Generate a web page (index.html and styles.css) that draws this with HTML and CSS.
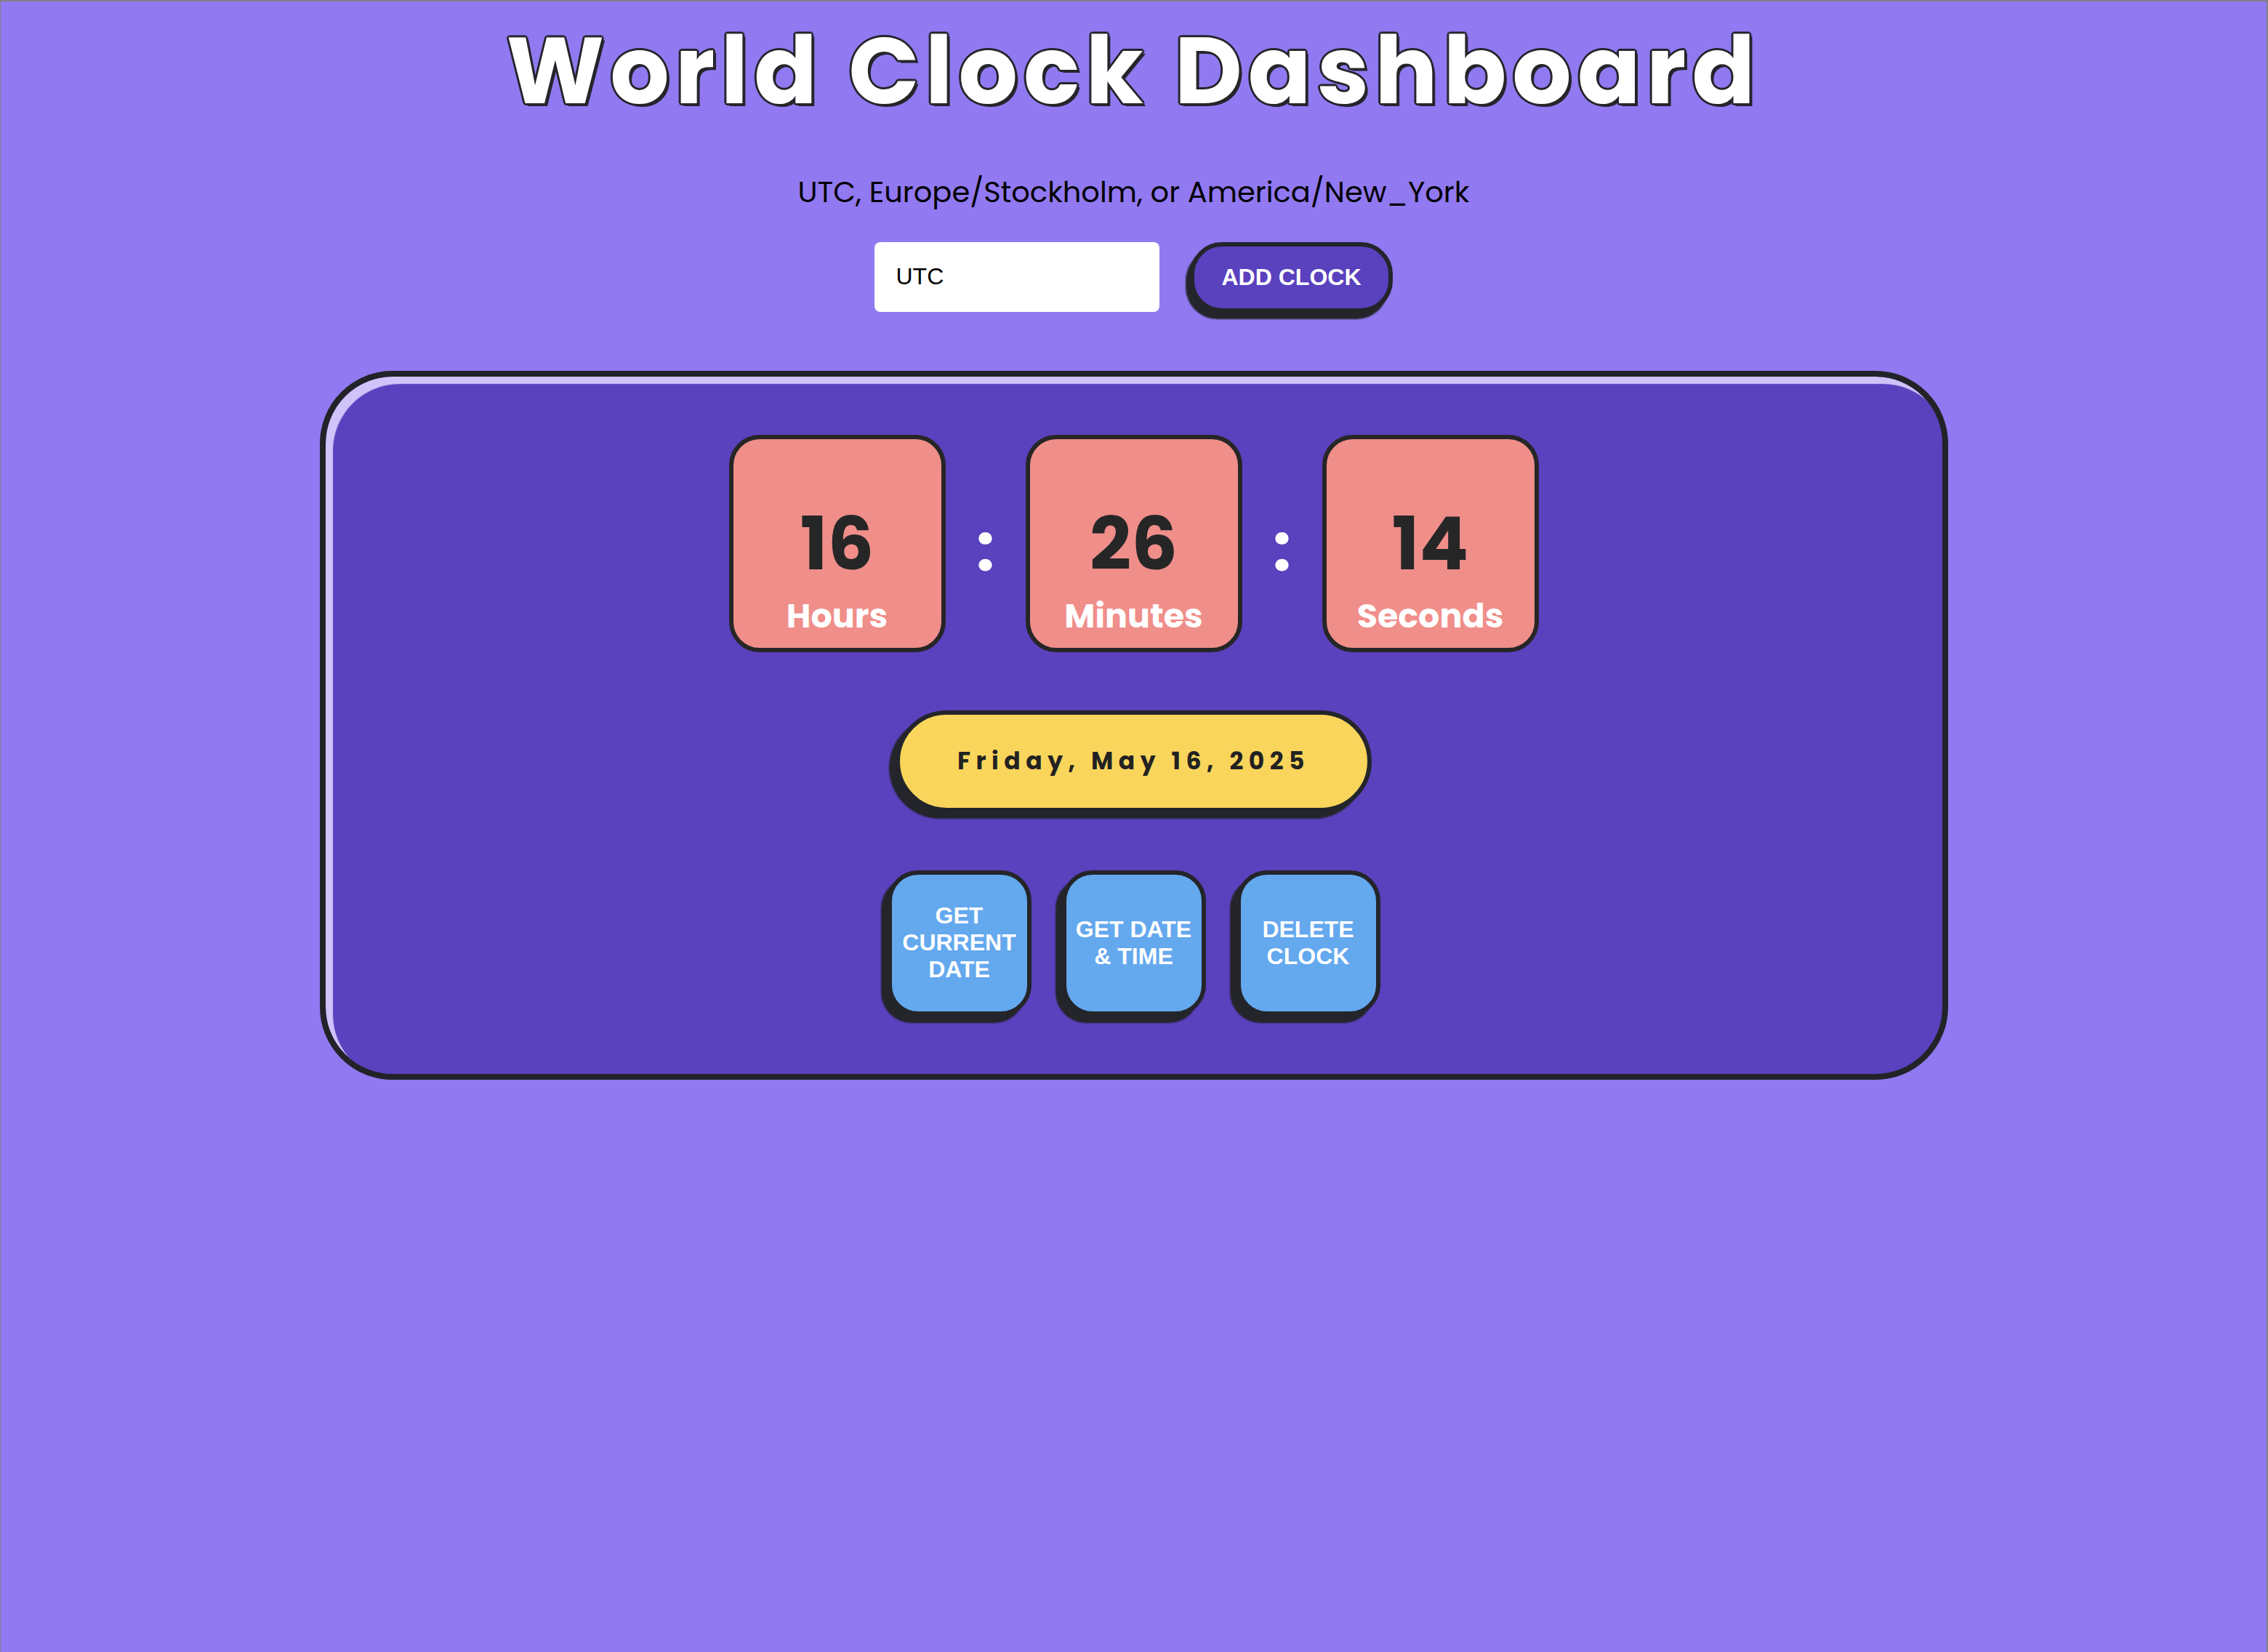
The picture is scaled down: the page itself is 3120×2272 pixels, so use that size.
FILE: index.html
```html
<!DOCTYPE html>
<html lang="en">
<head>
<meta charset="utf-8">
<title>World Clock Dashboard</title>
<link rel="stylesheet" href="styles.css">
</head>
<body>
<header class="header">
  <h1 class="title">World Clock Dashboard</h1>
  <p class="hint">UTC, Europe/Stockholm, or America/New_York</p>
  <div class="add-row">
    <input class="tz-input" type="text" value="UTC">
    <button class="btn-add">ADD CLOCK</button>
  </div>
</header>
<main class="clocks">
  <section class="clock-card">
    <div class="time-row">
      <div class="unit"><span class="num">16</span><span class="label">Hours</span></div>
      <span class="colon">:</span>
      <div class="unit"><span class="num">26</span><span class="label">Minutes</span></div>
      <span class="colon">:</span>
      <div class="unit"><span class="num">14</span><span class="label">Seconds</span></div>
    </div>
    <div class="date-pill">Friday, May 16, 2025</div>
    <div class="actions">
      <button class="act">GET CURRENT DATE</button>
      <button class="act">GET DATE &amp; TIME</button>
      <button class="act">DELETE CLOCK</button>
    </div>
  </section>
</main>
</body>
</html>
```

FILE: styles.css
```css
html {
  background: #9179f1;
  border-top: 2px solid #808080;
  border-left: 1px solid #808080;
  border-right: 2px solid #808080;
  min-height: 100%;
  box-sizing: border-box;
}
body {
  margin: 0;
  font-family: "Poppins", "Lato", sans-serif;
  color: #000;
}
.header {
  display: flex;
  flex-direction: column;
  align-items: center;
}
.title {
  margin: 19px 0 0;
  font-size: 128px;
  line-height: 1.2;
  font-weight: 700;
  letter-spacing: 8px;
  color: #fff;
  text-shadow:
    3px 0 0 #25252c, -3px 0 0 #25252c, 0 3px 0 #25252c, 0 -3px 0 #25252c,
    2px 2px 0 #25252c, -2px -2px 0 #25252c, 2px -2px 0 #25252c, -2px 2px 0 #25252c,
    4px 4px 0 #25252c;
}
.hint {
  margin: 59px 0 0;
  font-size: 40px;
  line-height: 1.5;
}
.add-row {
  display: flex;
  align-items: flex-start;
  gap: 42px;
  margin-top: 39px;
}
.tz-input {
  width: 392px;
  height: 96px;
  box-sizing: border-box;
  border: none;
  border-radius: 8px;
  padding: 0 30px;
  font-family: "Liberation Sans", Arial, sans-serif;
  font-size: 32px;
  color: #000;
  background: #fff;
  outline: none;
}
.btn-add {
  height: 97px;
  box-sizing: border-box;
  padding: 0 38px;
  border: 6px solid #23252a;
  border-radius: 44px;
  background: #5a41be;
  color: #fff;
  font-family: "Liberation Sans", Arial, sans-serif;
  font-weight: 700;
  font-size: 32px;
  box-shadow: -6px 9px 2px #23252a;
}
.clocks {
  display: flex;
  justify-content: center;
  margin-top: 80px;
}
.clock-card {
  width: 2240px;
  box-sizing: border-box;
  border: 8px solid #222328;
  border-radius: 100px;
  background: #5a41be;
  box-shadow: inset 10px 10px 1px #cfc3fa;
  padding: 80px;
  display: flex;
  flex-direction: column;
  align-items: center;
  gap: 80px;
}
.time-row {
  display: flex;
  align-items: center;
}
.unit {
  width: 298px;
  height: 299px;
  box-sizing: border-box;
  border: 6px solid #262626;
  border-radius: 42px;
  background: #f08e8a;
  display: flex;
  flex-direction: column;
  align-items: center;
  padding-top: 84px;
}
.num {
  font-size: 100px;
  line-height: 1.2;
  font-weight: 700;
  color: #262626;
}
.label {
  margin-top: 12px;
  font-size: 46px;
  line-height: 1.2;
  font-weight: 700;
  color: #fff;
}
.colon {
  width: 110px;
  text-align: center;
  font-size: 90px;
  font-weight: 700;
  line-height: 1;
  padding-top: 14px;
  color: #fff;
}
.date-pill {
  box-sizing: border-box;
  height: 140px;
  padding: 0 79px;
  border: 6px solid #23252a;
  border-radius: 70px;
  background: #f9d55c;
  box-shadow: -9px 9px 2px #23252a;
  display: flex;
  align-items: center;
  font-size: 33px;
  font-weight: 700;
  letter-spacing: 7.5px;
  color: #222;
}
.actions {
  display: flex;
  gap: 42px;
}
.act {
  width: 198px;
  height: 200px;
  box-sizing: border-box;
  border: 6px solid #23252a;
  border-radius: 42px;
  background: #64a8ee;
  color: #fff;
  font-family: "Liberation Sans", Arial, sans-serif;
  font-weight: 700;
  font-size: 32px;
  line-height: 37px;
  padding: 0 10px;
  box-shadow: -9px 10px 2px #23252a;
}
```
